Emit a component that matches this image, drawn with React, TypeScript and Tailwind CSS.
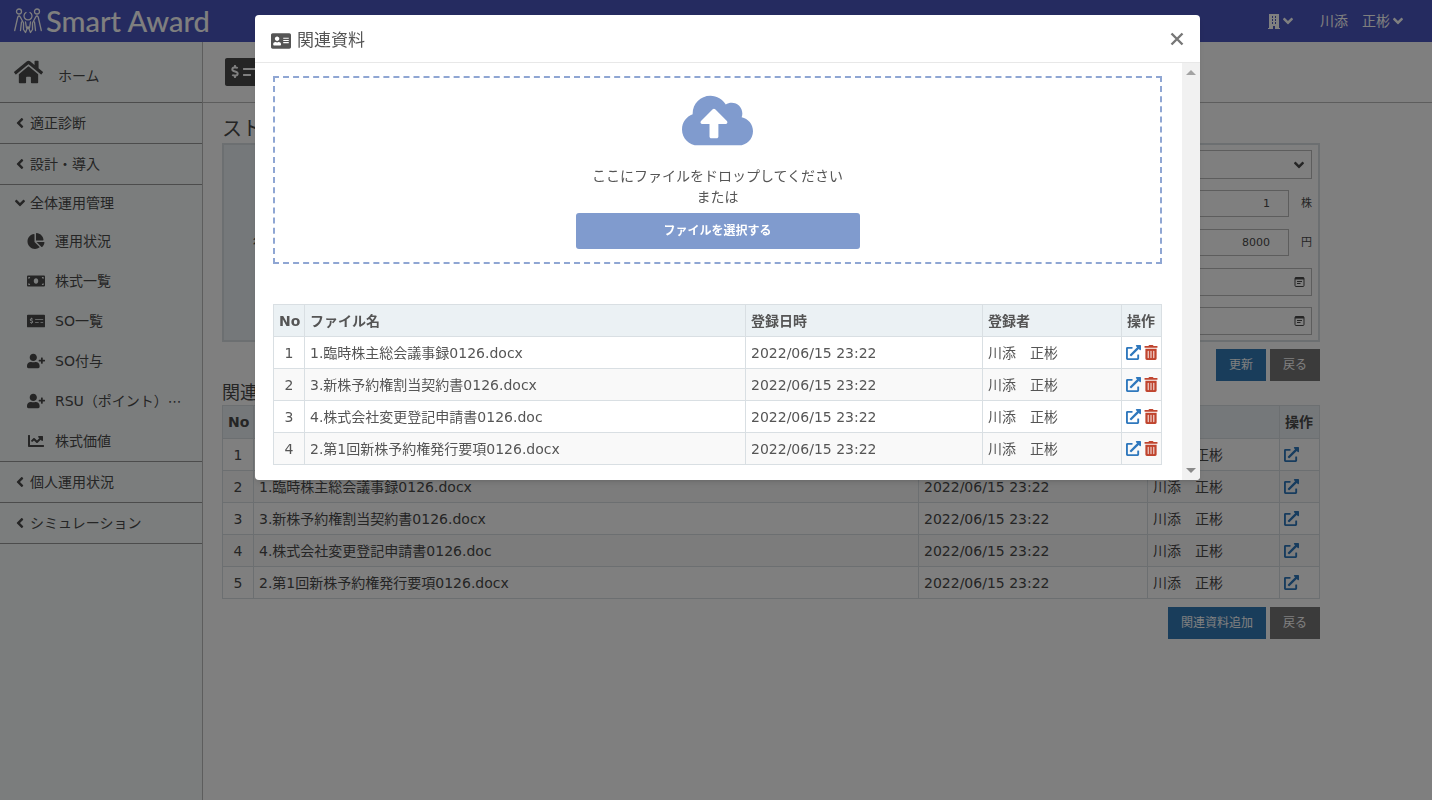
import { type ReactNode } from 'react';
import {
    FaAddressCard,
    FaAngleDown,
    FaAngleLeft,
    FaChartLine,
    FaChartPie,
    FaCloudUploadAlt,
    FaExternalLinkAlt,
    FaHome,
    FaMoneyBill,
    FaMoneyCheckAlt,
    FaTrashAlt,
    FaUserPlus,
} from 'react-icons/fa';

interface Doc {
    name: string;
    date: string;
    user: string;
}

const DATE = '2022/06/15 23:22';
const USER = '川添　正彬';

const modalDocs: Doc[] = [
    { name: '1.臨時株主総会議事録0126.docx', date: DATE, user: USER },
    { name: '3.新株予約権割当契約書0126.docx', date: DATE, user: USER },
    { name: '4.株式会社変更登記申請書0126.doc', date: DATE, user: USER },
    { name: '2.第1回新株予約権発行要項0126.docx', date: DATE, user: USER },
];

const pageDocs: Doc[] = [
    { name: '契約書.docx', date: DATE, user: USER },
    ...modalDocs,
];

const subItems = [
    { label: '運用状況', icon: <FaChartPie className="h-4 w-[18px]" /> },
    { label: '株式一覧', icon: <FaMoneyBill className="h-4 w-[18px]" /> },
    { label: 'SO一覧', icon: <FaMoneyCheckAlt className="h-4 w-[18px]" /> },
    { label: 'SO付与', icon: <FaUserPlus className="h-4 w-[18px]" /> },
    {
        label: 'RSU（ポイント）⋯',
        icon: <FaUserPlus className="h-4 w-[18px]" />,
    },
    { label: '株式価値', icon: <FaChartLine className="h-4 w-[18px]" /> },
];

function Logo() {
    return (
        <svg
            viewBox="0 0 28 26"
            className="h-[26px] w-7"
            fill="none"
            stroke="currentColor"
            strokeWidth="1.3"
            strokeLinecap="round"
            strokeLinejoin="round"
            aria-hidden="true"
        >
            <circle cx="5" cy="3.5" r="2.5" />
            <circle cx="23" cy="3.5" r="2.5" />
            <path d="M12 4.5A4 4 0 1 0 16 4.500" />
            <path d="M0.700 22.500 3.800 9Q5 7 6.300 9L9.500 15V21.500L11.500 24.500 14 18.500 16.500 24.500 18.500 21.500V15L21.700 9Q23 7 24.200 9L27.300 22.500" />
            <path d="M6.500 22.500 7.500 14M21.500 22.500 20.500 14M11.500 14 12.500 20M16.500 14 15.500 20" />
        </svg>
    );
}

function BuildingIcon() {
    return (
        <svg
            viewBox="0 0 12 15"
            className="h-[15px] w-3"
            fill="currentColor"
            aria-hidden="true"
        >
            <path
                fillRule="evenodd"
                d="M1 0H11V14H12V15H7V12H5V15H0V14H1ZM4 2V4H5V2ZM7 2V4H8V2ZM4 5V7H5V5ZM7 5V7H8V5ZM4 8V10H5V8ZM7 8V10H8V8Z"
            />
        </svg>
    );
}

function Header() {
    return (
        <header className="flex h-[42px] items-center justify-between bg-[#4b56c0] pr-[26px] pl-[14px] text-white">
            <a href="#" className="flex items-center gap-1">
                <Logo />
                <span className="font-[Lato,sans-serif] text-[29px] leading-8 font-medium">
                    Smart Award
                </span>
            </a>
            <div className="flex items-center gap-6">
                <button
                    type="button"
                    aria-label="会社"
                    className="flex items-center"
                >
                    <BuildingIcon />
                    <FaAngleDown className="size-4" />
                </button>
                <button type="button" className="flex items-center">
                    {USER}
                    <FaAngleDown className="size-4" />
                </button>
            </div>
        </header>
    );
}

function MenuItem({
    label,
    open = false,
    children,
}: {
    label: string;
    open?: boolean;
    children?: ReactNode;
}) {
    return (
        <li className="border-b border-[#999]">
            <a
                href="#"
                className={
                    open
                        ? 'flex h-9 items-center gap-[2px] pl-3'
                        : 'flex h-10 items-center gap-[2px] pl-3'
                }
            >
                {open ? (
                    <FaAngleDown className="size-4" />
                ) : (
                    <FaAngleLeft className="size-4" />
                )}
                {label}
            </a>
            {children}
        </li>
    );
}

function Sidebar() {
    return (
        <nav className="w-[203px] shrink-0 border-r border-[#bbb] bg-[#f7fbfb]">
            <a
                href="#"
                className="flex h-[61px] items-center gap-[15px] border-b border-[#999] pl-[14px]"
            >
                <FaHome className="h-[26px] w-[29px]" />
                <span className="pt-2">ホーム</span>
            </a>
            <ul>
                <MenuItem label="適正診断" />
                <MenuItem label="設計・導入" />
                <MenuItem label="全体運用管理" open>
                    <ul>
                        {subItems.map((item) => (
                            <li key={item.label}>
                                <a
                                    href="#"
                                    className="flex h-10 items-center gap-[10px] pl-[27px]"
                                >
                                    {item.icon}
                                    {item.label}
                                </a>
                            </li>
                        ))}
                    </ul>
                </MenuItem>
                <MenuItem label="個人運用状況" />
                <MenuItem label="シミュレーション" />
            </ul>
        </nav>
    );
}

function FormRow({
    id,
    label,
    unit,
    children,
}: {
    id: string;
    label: string;
    unit?: string;
    children: ReactNode;
}) {
    return (
        <div className="flex h-[39px]">
            <label
                htmlFor={id}
                className="flex w-[114px] items-center justify-center bg-[#ebf1f4]"
            >
                {label}
            </label>
            <div className="flex flex-1 items-center px-[6px] text-[11px]">
                {children}
                {unit && <span className="w-[23px] text-right">{unit}</span>}
            </div>
        </div>
    );
}

function DateField({ id }: { id: string }) {
    return (
        <div className="flex h-7 w-full items-center border border-[#bbb] pr-[6px] pl-2">
            <input
                id={id}
                type="date"
                className="flex-1 [&::-webkit-calendar-picker-indicator]:hidden"
            />
            <svg
                viewBox="0 0 11 11"
                className="size-[11px]"
                fill="none"
                stroke="currentColor"
                aria-hidden="true"
            >
                <rect x="1" y="1.5" width="9" height="9" rx="1" />
                <path d="M1 2.500H10" strokeWidth="2" />
                <path d="M3 5.500H8M3 7.500H6.500" />
            </svg>
        </div>
    );
}

function PageButton({
    children,
    primary = false,
}: {
    children: ReactNode;
    primary?: boolean;
}) {
    return (
        <button
            type="button"
            className={
                primary
                    ? 'h-8 bg-[#337ab7] px-[13px] text-xs text-white'
                    : 'h-8 bg-[#777] px-[13px] text-xs text-white'
            }
        >
            {children}
        </button>
    );
}

function DocTable({
    docs,
    deletable = false,
}: {
    docs: Doc[];
    deletable?: boolean;
}) {
    return (
        <table className="w-full table-fixed border-collapse text-left">
            <colgroup>
                <col className="w-[31px]" />
                <col />
                <col className={deletable ? 'w-[237px]' : 'w-[229px]'} />
                <col className={deletable ? 'w-[139px]' : 'w-[132px]'} />
                <col className="w-10" />
            </colgroup>
            <thead className="bg-[#ebf1f4]">
                <tr className={deletable ? 'h-8' : 'h-[33px]'}>
                    {['No', 'ファイル名', '登録日時', '登録者', '操作'].map(
                        (title) => (
                            <th
                                key={title}
                                className="border border-[#d9dfe3] px-[5px] whitespace-nowrap"
                            >
                                {title}
                            </th>
                        ),
                    )}
                </tr>
            </thead>
            <tbody>
                {docs.map((doc, index) => (
                    <tr key={doc.name} className="h-8 even:bg-[#f9f9f9]">
                        <td className="border border-[#d9dfe3] text-center">
                            {index + 1}
                        </td>
                        <td className="border border-[#d9dfe3] px-[5px]">
                            {doc.name}
                        </td>
                        <td className="border border-[#d9dfe3] px-[5px]">
                            {doc.date}
                        </td>
                        <td className="border border-[#d9dfe3] px-[5px]">
                            {doc.user}
                        </td>
                        <td className="border border-[#d9dfe3] px-1">
                            <div className="flex items-center gap-[3px]">
                                <a
                                    href="#"
                                    aria-label="開く"
                                    className="text-[#2f78bd]"
                                >
                                    <FaExternalLinkAlt className="size-[15px]" />
                                </a>
                                {deletable && (
                                    <button
                                        type="button"
                                        aria-label="削除"
                                        className="text-[#c0452f]"
                                    >
                                        <FaTrashAlt className="h-[15px] w-[14px]" />
                                    </button>
                                )}
                            </div>
                        </td>
                    </tr>
                ))}
            </tbody>
        </table>
    );
}

function Modal() {
    return (
        <div className="fixed inset-0 flex items-start justify-center bg-black/50 pt-[15px] pl-[23px]">
            <div
                role="dialog"
                aria-label="関連資料"
                className="w-full max-w-[945px] overflow-hidden rounded bg-white text-[#555] shadow-md"
            >
                <div className="flex h-12 items-center justify-between border-b border-[#e8e8e8] px-4">
                    <h2 className="flex items-center gap-[6px] pt-1 text-[17px]">
                        <FaAddressCard className="h-[18px] w-5" />
                        関連資料
                    </h2>
                    <button type="button" aria-label="閉じる">
                        <svg
                            viewBox="0 0 14 14"
                            className="size-[14px]"
                            stroke="#777"
                            strokeWidth="2.4"
                        >
                            <path d="M1.500 1.500 12.500 12.500M12.500 1.500 1.500 12.500" />
                        </svg>
                    </button>
                </div>
                <div className="flex">
                    <div className="flex-1 pt-[13px] pr-5 pb-[15px] pl-[18px]">
                        <div className="flex flex-col items-center border-2 border-dashed border-[#8fa6d3] pt-[14px] pb-[13px]">
                            <FaCloudUploadAlt className="h-[57px] w-[71px] text-[#809bce]" />
                            <p className="mt-[17px] text-center leading-[21px]">
                                ここにファイルをドロップしてください
                                <br />
                                または
                            </p>
                            <button
                                type="button"
                                className="mt-[5px] h-9 w-[284px] rounded-[3px] bg-[#809bce] text-xs font-bold text-white"
                            >
                                ファイルを選択する
                            </button>
                        </div>
                        <div className="mt-10">
                            <DocTable docs={modalDocs} deletable />
                        </div>
                    </div>
                    <div className="flex w-[18px] flex-col items-center justify-between bg-[#f1f1f1] py-[7px]">
                        <svg viewBox="0 0 10 5" className="h-[5px] w-[10px]">
                            <path d="M0 5 5 0 10 5Z" fill="#a3a3a3" />
                        </svg>
                        <svg viewBox="0 0 10 5" className="h-[5px] w-[10px]">
                            <path d="M0 0 5 5 10 0Z" fill="#8a8a8a" />
                        </svg>
                    </div>
                </div>
            </div>
        </div>
    );
}

export default function App() {
    return (
        <div className="flex min-h-screen flex-col bg-white font-['DejaVu_Sans','Noto_Sans_CJK_JP',sans-serif] text-sm text-[#4a4a4a]">
            <Header />
            <div className="flex flex-1">
                <Sidebar />
                <main className="flex-1">
                    <div className="flex h-[61px] items-center border-b border-[#bbb] pl-[22px]">
                        <FaMoneyCheckAlt className="h-8 w-10" />
                    </div>
                    <div className="max-w-[1117px] pt-3 pl-[19px]">
                        <h1 className="text-xl leading-7">
                            ストックオプション
                        </h1>
                        <form className="border-2 border-[#d9dfe3]">
                            <FormRow id="kind" label="区分">
                                <div className="flex h-[29px] w-full items-center border border-[#bbb] pr-1 pl-2">
                                    <select
                                        id="kind"
                                        className="flex-1 appearance-none"
                                    >
                                        <option>新株予約権</option>
                                    </select>
                                    <FaAngleDown className="size-4" />
                                </div>
                            </FormRow>
                            <FormRow id="count" label="株数" unit="株">
                                <input
                                    id="count"
                                    defaultValue="1"
                                    className="h-[27px] flex-1 border border-[#bbb] pr-[18px] text-right"
                                />
                            </FormRow>
                            <FormRow id="price" label="行使価額" unit="円">
                                <input
                                    id="price"
                                    defaultValue="8000"
                                    className="h-[27px] flex-1 border border-[#bbb] pr-[18px] text-right"
                                />
                            </FormRow>
                            <FormRow id="start" label="開始日">
                                <DateField id="start" />
                            </FormRow>
                            <FormRow id="end" label="終了日">
                                <DateField id="end" />
                            </FormRow>
                        </form>
                        <div className="mt-[7px] flex justify-end gap-1">
                            <PageButton primary>更新</PageButton>
                            <PageButton>戻る</PageButton>
                        </div>
                        <h2 className="text-lg leading-6">関連資料</h2>
                        <DocTable docs={pageDocs} />
                        <div className="mt-2 flex justify-end gap-1">
                            <PageButton primary>関連資料追加</PageButton>
                            <PageButton>戻る</PageButton>
                        </div>
                    </div>
                </main>
            </div>
            <Modal />
        </div>
    );
}
